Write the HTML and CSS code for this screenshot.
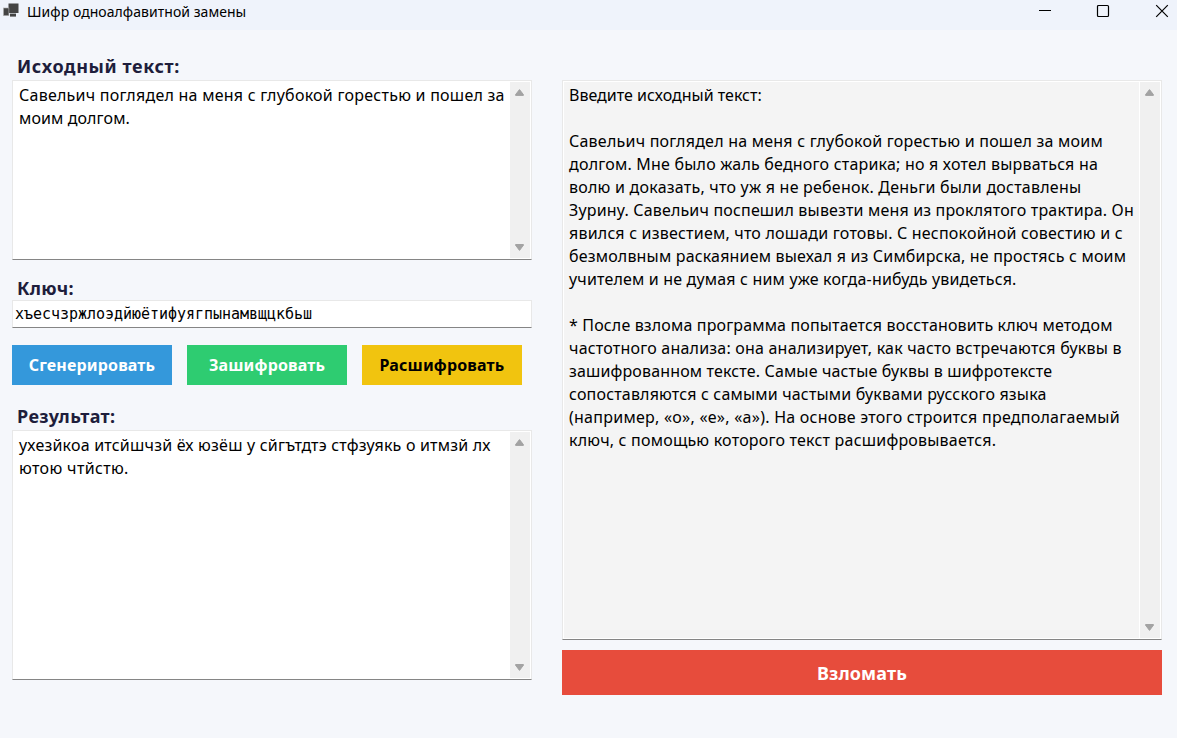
FILE: index.html
```html
<!DOCTYPE html>
<html lang="ru">
<head>
<meta charset="utf-8">
<title>Шифр одноалфавитной замены</title>
<link rel="stylesheet" href="styles.css">
</head>
<body>
<header class="titlebar">
  <svg class="app-icon" width="18" height="18" viewBox="0 0 18 18"><rect x="7.5" y="3.5" width="10" height="9.5" fill="#444"/><rect x="2.5" y="8" width="5.4" height="7.6" fill="#444" stroke="#aaa" stroke-width=".6"/><rect x="9" y="13.6" width="6" height="3" fill="#444"/></svg>
  <h1 class="window-title"><span>Шифр одноалфавитной замены</span></h1>
  <div class="window-controls">
    <svg width="14" height="14" viewBox="0 0 14 14"><path d="M1 6.5H13" stroke="#000"/></svg>
    <svg width="14" height="14" viewBox="0 0 14 14"><rect x="1.5" y="1.5" width="11" height="11" rx="1" fill="none" stroke="#000" stroke-width="1.2"/></svg>
    <svg width="14" height="14" viewBox="0 0 14 14"><path d="M1.2 1.2L12.8 12.8M12.8 1.2L1.2 12.8" stroke="#000" stroke-width="1.2"/></svg>
  </div>
</header>
<main class="content">
  <section class="left">
    <h2 class="label label-source">Исходный текст:</h2>
    <div class="textbox source">
      <div class="text">
        <p class="ls-25">Савельич поглядел на меня с глубокой горестью и пошел за</p>
        <p class="ls-10">моим долгом.</p>
      </div>
      <div class="scroll"><svg width="9" height="8" viewBox="0 0 9 8"><path d="M4.5 .6L8.4 5.6V6.4H.6V5.6Z" fill="#a3a3a3" stroke="#a3a3a3" stroke-linejoin="round"/></svg><svg width="9" height="8" viewBox="0 0 9 8"><path d="M4.5 7.4L8.4 2.2V1.5H.6V2.2Z" fill="#a3a3a3" stroke="#a3a3a3" stroke-linejoin="round"/></svg></div>
    </div>
    <h2 class="label label-key">Ключ:</h2>
    <div class="textbox key"><span>хъесчзржлоэдйюётифуягпынамвщцкбьш</span></div>
    <div class="buttons">
      <button class="btn blue"><span>Сгенерировать</span></button>
      <button class="btn green"><span>Зашифровать</span></button>
      <button class="btn yellow"><span>Расшифровать</span></button>
    </div>
    <h2 class="label label-result">Результат:</h2>
    <div class="textbox result">
      <div class="text">
        <p class="ls-20">ухезйкоа итсйшчзй ёх юзёш у сйгътдтэ стфзуякь о итмзй лх</p>
        <p class="ls-35">ютою чтйстю.</p>
      </div>
      <div class="scroll"><svg width="9" height="8" viewBox="0 0 9 8"><path d="M4.5 .6L8.4 5.6V6.4H.6V5.6Z" fill="#a3a3a3" stroke="#a3a3a3" stroke-linejoin="round"/></svg><svg width="9" height="8" viewBox="0 0 9 8"><path d="M4.5 7.4L8.4 2.2V1.5H.6V2.2Z" fill="#a3a3a3" stroke="#a3a3a3" stroke-linejoin="round"/></svg></div>
    </div>
  </section>
  <section class="right">
    <div class="textbox info">
      <div class="text">
        <p>Введите исходный текст:</p>
        <p></p>
        <p class="ls-23">Савельич поглядел на меня с глубокой горестью и пошел за моим</p>
        <p class="ls-20">долгом. Мне было жаль бедного старика; но я хотел вырваться на</p>
        <p class="ls-23">волю и доказать, что уж я не ребенок. Деньги были доставлены</p>
        <p class="ls-17">Зурину. Савельич поспешил вывезти меня из проклятого трактира. Он</p>
        <p class="ls-20">явился с известием, что лошади готовы. С неспокойной совестию и с</p>
        <p class="ls-17">безмолвным раскаянием выехал я из Симбирска, не простясь с моим</p>
        <p class="ls-17">учителем и не думая с ним уже когда-нибудь увидеться.</p>
        <p></p>
        <p class="ls-15">* После взлома программа попытается восстановить ключ методом</p>
        <p class="ls-20">частотного анализа: она анализирует, как часто встречаются буквы в</p>
        <p class="ls-15">зашифрованном тексте. Самые частые буквы в шифротексте</p>
        <p class="ls-17">сопоставляются с самыми частыми буквами русского языка</p>
        <p class="ls-25">(например, «о», «е», «а»). На основе этого строится предполагаемый</p>
        <p class="ls-20">ключ, с помощью которого текст расшифровывается.</p>
      </div>
      <div class="scroll"><svg width="9" height="8" viewBox="0 0 9 8"><path d="M4.5 .6L8.4 5.6V6.4H.6V5.6Z" fill="#a3a3a3" stroke="#a3a3a3" stroke-linejoin="round"/></svg><svg width="9" height="8" viewBox="0 0 9 8"><path d="M4.5 7.4L8.4 2.2V1.5H.6V2.2Z" fill="#a3a3a3" stroke="#a3a3a3" stroke-linejoin="round"/></svg></div>
    </div>
    <button class="btn red"><span>Взломать</span></button>
  </section>
</main>
</body>
</html>
```
FILE: styles.css
```css
* { box-sizing: border-box; margin: 0; padding: 0; }
body { width: 1177px; height: 738px; overflow: hidden; background: #f5f7fb; color: #000; font-family: "Noto Sans", "Open Sans", sans-serif; }
svg { display: block; }
.titlebar { display: flex; height: 30px; background: #eff3fb; padding-left: 1px; }
.window-title { font-size: 14px; font-weight: 400; line-height: 24px; margin-left: 8px; white-space: nowrap; letter-spacing: 0.05px; }
.window-controls { display: flex; gap: 44px; margin-left: auto; padding: 4px 8px 0 0; }
.window-controls svg:last-child { margin-left: 1px; }
.content { display: flex; gap: 30px; padding: 22px 15px 0 12px; }
.left { width: 520px; }
.right { width: 600px; padding-top: 28px; }
.label { height: 28px; padding-left: 5px; font-size: 18px; font-weight: 700; line-height: 28px; color: #1e1e3c; white-space: nowrap; }
.label-source { letter-spacing: 0.6px; }
.label-key { letter-spacing: 0.3px; padding-top: 1px; }
.label-result { letter-spacing: 0.4px; }
.textbox { display: flex; background: #fff; border: 1px solid #e8e8e8; border-bottom-color: #858585; }
.source { height: 180px; margin-bottom: 13px; }
.result { height: 250px; }
.info { height: 560px; }
.text { flex: 1; min-width: 0; padding: 3px 0 0 6px; font-size: 16px; line-height: 23px; white-space: nowrap; }
.text p { height: 23px; }
/* Tracking steps for the wrapped lines */
.ls-10 { letter-spacing: 0.1px; }
.ls-15 { letter-spacing: 0.15px; }
.ls-17 { letter-spacing: 0.175px; }
.ls-20 { letter-spacing: 0.205px; }
.ls-23 { letter-spacing: 0.23px; }
.ls-25 { letter-spacing: 0.25px; }
.ls-35 { letter-spacing: 0.35px; }
.scroll { display: flex; flex-direction: column; justify-content: space-between; width: 20px; margin: 1px 1px 1px 0; padding: 7px 6px 7px 5px; background: #f0f0f0; }
.info .text { background: #f4f4f4; margin: 1px; padding: 2px 0 0 5px; }
.key { height: 28px; margin-top: -1px; padding-left: 2px; align-items: center; font-family: "DejaVu Sans Mono", monospace; font-size: 15px; letter-spacing: -0.03px; }
.buttons { display: flex; gap: 15px; margin: 17px 0; }
.btn { display: flex; align-items: center; justify-content: center; width: 160px; height: 40px; border: 0; font-family: inherit; font-size: 16px; font-weight: 700; letter-spacing: 0.15px; color: #fff; white-space: nowrap; }
.blue { background: #3498db; }
.green { background: #2ecc71; }
.yellow { background: #f1c40f; color: #000; }
.red { width: 600px; height: 45px; margin-top: 10px; background: #e74c3c; font-size: 18px; }
```
